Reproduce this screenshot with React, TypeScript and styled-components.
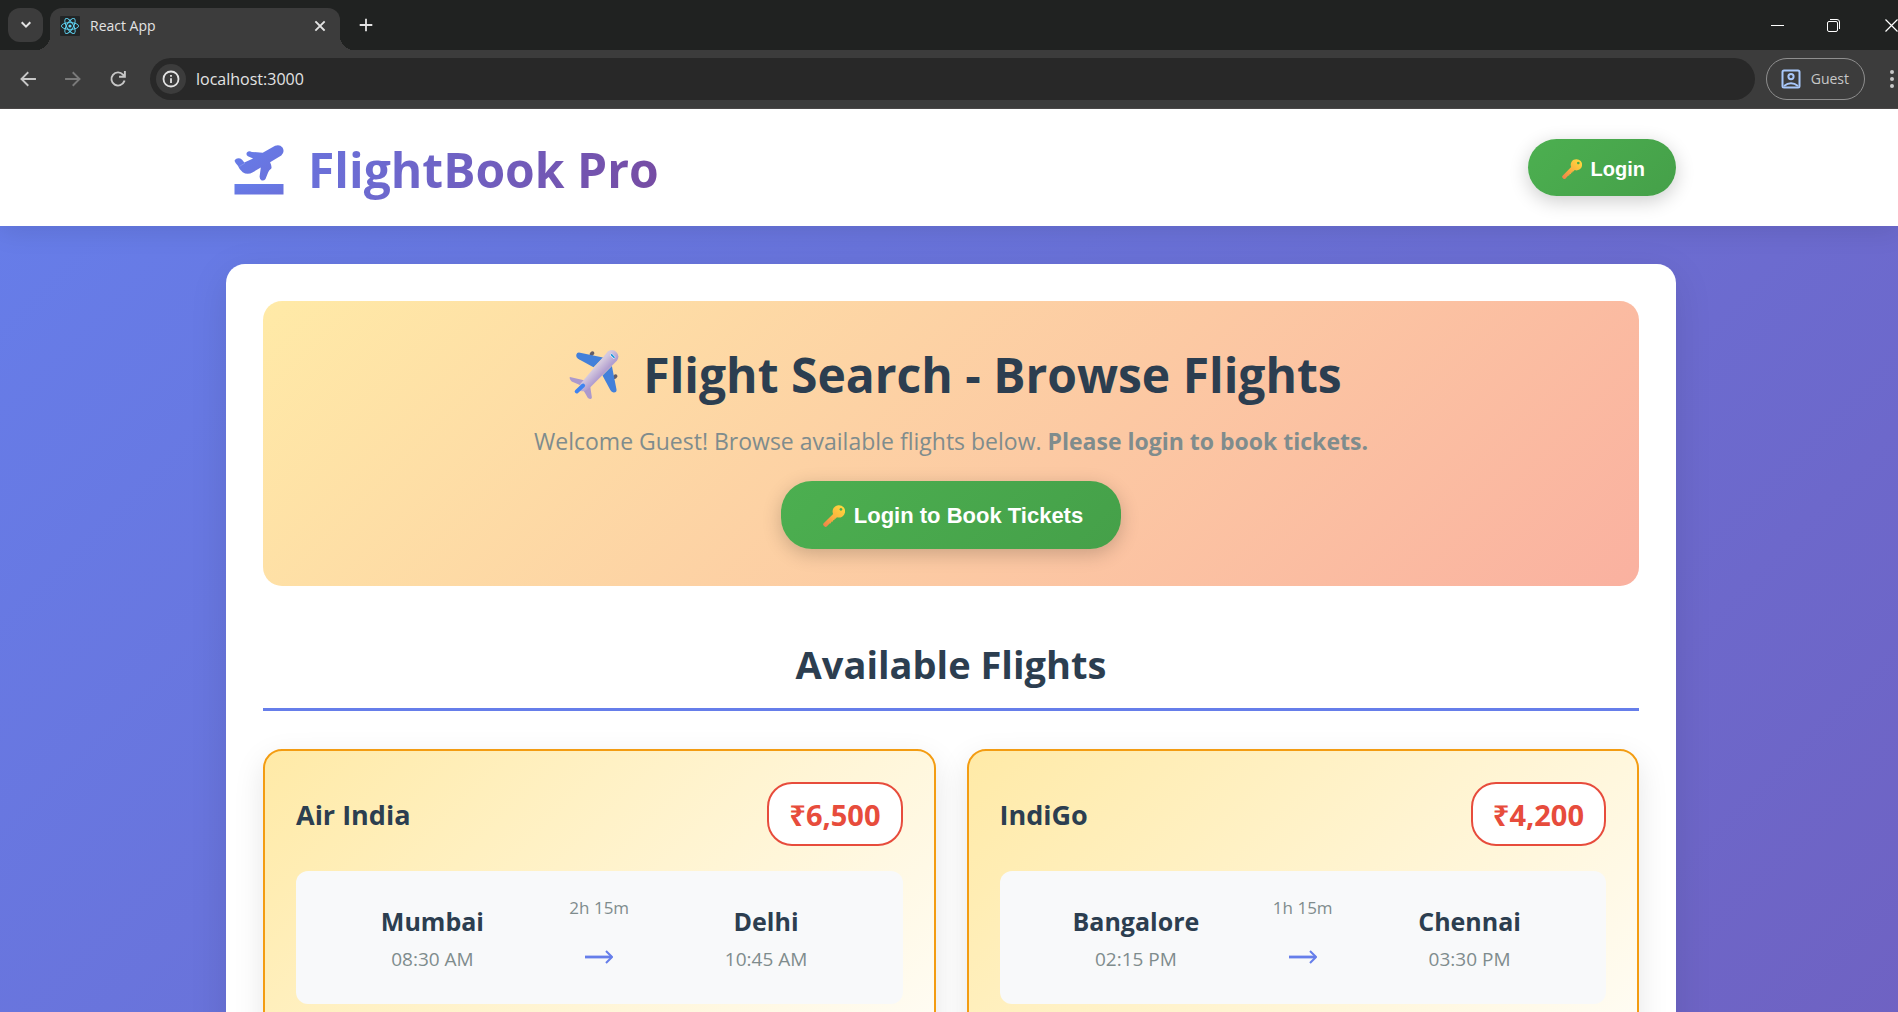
import React from "react";
import styled, { createGlobalStyle } from "styled-components";

const sans = `"Open Sans", "Noto Sans", sans-serif`;
const ink = "#2c3e50";
const muted = "#7f8c8d";

const GlobalStyle = createGlobalStyle`
  *, *::before, *::after { box-sizing: border-box; }
  body { margin: 0; overflow: hidden; font-family: ${sans}; color: ${ink}; }
  h1, h2, h3, p { margin: 0; }
  button { font: inherit; color: inherit; border: 0; background: none; padding: 0; cursor: pointer; }
  svg { display: block; flex: none; }
`;

const Window = styled.div`
  display: flex;
  flex-direction: column;
  height: 100vh;
  overflow: hidden;
`;

/* ---- browser frame ---- */

const TabStrip = styled.div`
  display: flex;
  align-items: flex-end;
  flex: none;
  height: 50px;
  padding-left: 8px;
  background: #202221;
  color: #e3e3e3;
`;

const TabSearch = styled.button`
  display: grid;
  place-items: center;
  width: 35px;
  height: 34px;
  margin-bottom: 8px;
  border-radius: 12px;
  background: #3c3c3c;
`;

const Tab = styled.div`
  position: relative;
  display: flex;
  align-items: center;
  gap: 10px;
  width: 290px;
  height: 42px;
  margin-left: 7px;
  padding: 0 12px 7px 10px;
  border-radius: 12px 12px 0 0;
  background: #3c3c3c;
  font-size: 14px;
  line-height: 20px;

  &::before,
  &::after {
    content: "";
    position: absolute;
    bottom: 0;
    width: 14px;
    height: 14px;
  }
  &::before {
    right: 100%;
    background: radial-gradient(circle at 0 0, transparent 14px, #3c3c3c 14px);
  }
  &::after {
    left: 100%;
    background: radial-gradient(circle at 100% 0, transparent 14px, #3c3c3c 14px);
  }
`;

const TabTitle = styled.span`
  flex: 1;
`;

const IconButton = styled.button<{ $w?: number; $h?: number }>`
  display: grid;
  place-items: center;
  flex: none;
  width: ${(p) => p.$w ?? 16}px;
  height: ${(p) => p.$h ?? 16}px;
`;

const NewTab = styled(IconButton)`
  margin: 0 0 17px 18px;
`;

const WindowControls = styled.div`
  display: flex;
  align-items: center;
  height: 50px;
  margin-left: auto;
`;

const CloseWindow = styled(IconButton)`
  justify-content: end;
`;

const Toolbar = styled.div`
  display: flex;
  align-items: center;
  flex: none;
  height: 59px;
  padding: 7px 0 8px 5px;
  border-bottom: 1px solid #4a4747;
  background: #3c3c3c;
  color: #c7c7c7;
`;

const AddressBar = styled.label`
  display: flex;
  align-items: center;
  flex: 1;
  gap: 10px;
  height: 42px;
  margin: 0 11px 0 10px;
  padding-left: 6px;
  border-radius: 21px;
  background: #282828;
`;

const SiteInfo = styled.span`
  display: grid;
  place-items: center;
  width: 30px;
  height: 30px;
  border-radius: 50%;
  background: #3c3c3c;
  color: #e3e3e3;
`;

const AddressInput = styled.input`
  flex: 1;
  border: 0;
  padding: 0;
  outline: 0;
  background: none;
  color: #e3e3e3;
  font-family: ${sans};
  font-size: 16px;
  line-height: 24px;
`;

const Profile = styled.button`
  display: flex;
  align-items: center;
  gap: 10px;
  height: 42px;
  padding: 0 15px 0 14px;
  border: 1px solid #8f8f8f;
  border-radius: 21px;
  font-size: 14px;
  line-height: 20px;
`;

/* ---- page ---- */

const Viewport = styled.div`
  flex: 1;
  min-height: 0;
  overflow: hidden;
`;

const Page = styled.div`
  min-height: 320vh;
  background: linear-gradient(135deg, #667eea 0%, #764ba2 100%);
`;

const Header = styled.header`
  position: relative;
  height: 117px;
  padding: 0 16px 0 20px;
  background: #fff;
  box-shadow: 0 5px 25px rgba(0, 0, 0, 0.1);
`;

const HeaderInner = styled.div`
  display: flex;
  align-items: center;
  justify-content: space-between;
  max-width: 1450px;
  height: 100%;
  margin: 0 auto;
`;

const Logo = styled.h1`
  display: flex;
  align-items: center;
  gap: 24px;
  padding: 4px 0 0 8px;
  font-size: 48px;
  line-height: 68px;
`;

const LogoText = styled.span`
  background: linear-gradient(110deg, #6a72dc 0%, #764ba2 100%);
  background-clip: text;
  -webkit-background-clip: text;
  color: transparent;
`;

const LoginButton = styled.button<{ $large?: boolean }>`
  display: inline-flex;
  align-items: center;
  gap: 9px;
  height: ${(p) => (p.$large ? 68 : 57)}px;
  padding: ${(p) => (p.$large ? "2px 38px 0 42px" : "2px 31px 0 34px")};
  border-radius: 31px;
  background: linear-gradient(135deg, #4caf50, #45a049);
  box-shadow: 0 5px 19px rgba(0, 0, 0, 0.2);
  color: #fff;
  font-family: "Liberation Sans", Arial, sans-serif;
  font-weight: 700;
  font-size: ${(p) => (p.$large ? 22 : 20)}px;
  line-height: 26px;
  white-space: nowrap;
`;

const Main = styled.main`
  padding: 38px 16px 38px 20px;
`;

const Panel = styled.div`
  max-width: 1450px;
  margin: 0 auto;
  padding: 37px;
  border-radius: 19px;
  background: #fff;
  box-shadow: 0 10px 38px rgba(0, 0, 0, 0.1);
`;

const Banner = styled.section`
  display: flex;
  flex-direction: column;
  align-items: center;
  padding: 37px;
  border-radius: 19px;
  background: linear-gradient(135deg, #ffeaa7 0%, #fab1a0 100%);
  text-align: center;
`;

const BannerTitle = styled.h2`
  display: flex;
  align-items: center;
  gap: 24px;
  padding-left: 9px;
  font-size: 48px;
  line-height: 74px;
`;

const BannerText = styled.p`
  margin: 11px 0 21px;
  color: ${muted};
  font-size: 23px;
  line-height: 37px;
`;

const SectionTitle = styled.h2`
  margin: 50px 0 38px;
  padding-bottom: 15px;
  border-bottom: 3px solid #667eea;
  text-align: center;
  font-size: 38px;
  line-height: 57px;
`;

const FlightGrid = styled.div`
  display: grid;
  grid-template-columns: repeat(2, 1fr);
  gap: 31px;
`;

const FlightCard = styled.article`
  padding: 31px;
  border: 2px solid #f39c12;
  border-radius: 19px;
  background: linear-gradient(135deg, #ffeaa7 0%, #fff 100%);
  box-shadow: 0 10px 31px rgba(0, 0, 0, 0.1);
  min-height: 420px;
`;

const CardTop = styled.div`
  display: flex;
  align-items: center;
  justify-content: space-between;
  margin-bottom: 25px;
`;

const Airline = styled.h3`
  padding-top: 2px;
  font-size: 27px;
  line-height: 38px;
`;

const Price = styled.span`
  padding: 11px 20px 9px;
  border: 2px solid #e74c3c;
  border-radius: 25px;
  background: #fff;
  color: #e74c3c;
  font-weight: 700;
  font-size: 29px;
  line-height: 40px;
`;

const Route = styled.div`
  display: grid;
  grid-template-columns: repeat(3, 1fr);
  align-items: center;
  height: 133px;
  padding: 0 53px;
  border-radius: 12px;
  background: #f8f9fa;
  text-align: center;
`;

const Stop = styled.div`
  padding-top: 4px;
  line-height: 38px;
`;

const City = styled.div`
  font-weight: 700;
  font-size: 25px;
`;

const Time = styled.div`
  color: ${muted};
  font-size: 19px;
`;

const Leg = styled.div`
  display: flex;
  flex-direction: column;
  align-items: center;
  gap: 26px;
  padding-bottom: 20px;
  color: ${muted};
  font-size: 17px;
  line-height: 32px;
`;

/* ---- drawings ---- */

const stroke = { fill: "none", stroke: "currentColor", strokeLinecap: "square" as const };

const ReactMark = () => (
  <svg width="20" height="20" viewBox="0 0 20 20">
    <rect width="20" height="20" rx="1" fill="#222526" />
    <g fill="none" stroke="#61dafb" strokeWidth="0.9">
      <ellipse cx="10" cy="10" rx="8.6" ry="3.4" />
      <ellipse cx="10" cy="10" rx="8.6" ry="3.4" transform="rotate(60 10 10)" />
      <ellipse cx="10" cy="10" rx="8.6" ry="3.4" transform="rotate(120 10 10)" />
    </g>
    <circle cx="10" cy="10" r="1.6" fill="#61dafb" />
  </svg>
);

const Key = ({ size }: { size: number }) => (
  <svg width={size} height={size} viewBox="0 0 20 20" aria-hidden="true">
    <defs>
      <linearGradient id="keyGold" x1="1" y1="0" x2="0" y2="1">
        <stop offset="0.1" stopColor="#ffd63d" />
        <stop offset="0.55" stopColor="#fbb040" />
        <stop offset="1" stopColor="#ee7f4b" />
      </linearGradient>
    </defs>
    <path
      fill="url(#keyGold)"
      fillRule="evenodd"
      d="M14.4 0.2a5.6 5.6 0 1 1-1.7 10.9L11.4 12.4 10.6 12.4 10.4 13.6 9.2 13.8 9 15 7.6 15.2 7.2 16.6 6 16.8 3.6 19.4Q2.4 20.4 1.2 19.4L0.5 18.7Q-0.3 17.7 0.6 16.7L9.2 8.1A5.6 5.6 0 0 1 14.4 0.2ZM16.3 2.7a1.3 1.3 0 1 0 0.01 0Z"
    />
  </svg>
);

const Departure = () => (
  <svg width="50" height="50" viewBox="0 0 49 50" aria-hidden="true">
    <defs>
      <linearGradient id="dep" x1="0" y1="0" x2="1" y2="1">
        <stop offset="0" stopColor="#667eea" />
        <stop offset="1" stopColor="#6a70db" />
      </linearGradient>
    </defs>
    <g fill="url(#dep)">
      <path d="M0 15.8 1.3 14Q4.6 12.4 7.6 14.7L9.8 17.4 18.6 13.4 13.4 11.2Q11 9.4 12.6 7.3 14.4 5.4 17.4 6.9L28.2 7.8 40.6 0.8Q45.2-1 48 2.6 50.6 7 46.8 10.4L35.6 17.2Q37.6 21.6 36.8 23.6L34.9 25.2 33.7 27.2 31 34Q29.4 36 27.2 35.4 25 34.4 25.1 31.6L26.3 22.6 18.4 27.2Q13 30.2 8.2 27.2 4.8 24.6 3.4 20.8Q0.6 18 0 15.8Z" />
      <path d="M0 39H49V49.4H0Z" />
    </g>
    <path d="M5 21.4 10.6 18" stroke="#9aa8f0" strokeWidth="0.5" />
  </svg>
);

const Plane = () => (
  <svg width="50" height="50" viewBox="0 0 49 50" aria-hidden="true">
    <defs>
      <linearGradient id="hull" x1="0.3" y1="0.3" x2="0.7" y2="0.7">
        <stop offset="0.3" stopColor="#d5c9de" />
        <stop offset="0.7" stopColor="#b29fd0" />
      </linearGradient>
    </defs>
    <g fill="#635d68">
      <ellipse cx="22.5" cy="3.6" rx="2" ry="2.6" transform="rotate(45 22.5 3.6)" />
      <ellipse cx="45.6" cy="26.6" rx="2.6" ry="2" transform="rotate(-45 45.6 26.6)" />
    </g>
    <g fill="#4380da">
      <path d="M9.4 2.5 33.5 7.4 24 17.2 9.4 9.2Q6.2 7.2 6.8 4.7 7.4 2.4 9.4 2.5Z" />
      <path d="M42.4 16 47 39.4Q47.4 42.4 44.4 42.4 42.2 42.6 40.8 40L33 25.6Z" />
    </g>
    <path fill="#ac99cc" d="M0.4 27 15.6 30.4 11 35.2 2.2 31.4Q-0.6 28.6 0.4 27ZM20.4 34.6 22.4 47.6Q21.6 50.4 18.4 48L13.2 39Z" />
    <path fill="url(#hull)" d="M38.4 1.4Q43.2-1.6 46.8 1.9 50.6 5.8 47.6 10.4L20.6 37.4Q14.6 42.4 10.8 41 8.4 38.6 11.2 33.6Z" />
    <path d="M7.2 41.4 13.6 35.6" stroke="#3f83f0" strokeWidth="4" strokeLinecap="round" />
    <path d="M41.2 4.2 45.2 8" stroke="#eef6ff" strokeWidth="2.6" />
    <path d="M41.6 4.4 45 7.8" stroke="#1593d6" strokeWidth="1.6" />
  </svg>
);

const Arrow = () => (
  <svg width="28" height="14" viewBox="0 0 28 14" fill="none" stroke="#667eea" aria-hidden="true">
    <path d="M0 7H26.5" strokeWidth="2.8" />
    <path d="M21 1 27 7 21 13" strokeWidth="2" />
  </svg>
);

const flights = [
  { airline: "Air India", price: "₹6,500", from: "Mumbai", dep: "08:30 AM", duration: "2h 15m", to: "Delhi", arr: "10:45 AM" },
  { airline: "IndiGo", price: "₹4,200", from: "Bangalore", dep: "02:15 PM", duration: "1h 15m", to: "Chennai", arr: "03:30 PM" },
];

const BrowserFrame = () => (
  <>
    <TabStrip>
      <TabSearch aria-label="Search tabs">
        <svg width="12" height="12" viewBox="0 0 12 12" {...stroke} strokeWidth="2">
          <path d="M2.4 4 6 7.6 9.6 4" />
        </svg>
      </TabSearch>
      <Tab>
        <ReactMark />
        <TabTitle>React App</TabTitle>
        <IconButton aria-label="Close tab">
          <svg width="16" height="16" viewBox="0 0 16 16" {...stroke} strokeWidth="1.8">
            <path d="M4 4 12 12M12 4 4 12" />
          </svg>
        </IconButton>
      </Tab>
      <NewTab aria-label="New tab">
        <svg width="16" height="16" viewBox="0 0 16 16" {...stroke} strokeWidth="1.8">
          <path d="M8 2.6V13.4M2.6 8H13.4" />
        </svg>
      </NewTab>
      <WindowControls>
        <IconButton $w={56} $h={49} aria-label="Minimize">
          <svg width="13" height="13" viewBox="0 0 13 13" fill="none" stroke="#fff">
            <path d="M0 6.5H13" />
          </svg>
        </IconButton>
        <IconButton $w={56} $h={49} aria-label="Restore">
          <svg width="13" height="13" viewBox="0 0 13 13" fill="none" stroke="#fff">
            <rect x="0.5" y="2.5" width="10" height="10" rx="1.5" />
            <path d="M3 0.5H10Q12.5 0.5 12.5 3V10" />
          </svg>
        </IconButton>
        <CloseWindow $w={37} $h={49} aria-label="Close window">
          <svg width="13" height="13" viewBox="0 0 13 13" fill="none" stroke="#fff" strokeWidth="1.2">
            <path d="M0.5 0.5 12.5 12.5M12.5 0.5 0.5 12.5" />
          </svg>
        </CloseWindow>
      </WindowControls>
    </TabStrip>
    <Toolbar>
      <IconButton $w={45} $h={40} aria-label="Back">
        <svg width="16" height="16" viewBox="0 0 16 16" {...stroke} strokeWidth="1.9">
          <path d="M1.8 8H15M7.6 1.9 1.5 8 7.6 14.1" />
        </svg>
      </IconButton>
      <IconButton $w={45} $h={40} aria-label="Forward">
        <svg width="16" height="16" viewBox="0 0 16 16" {...stroke} stroke="#7a7a7a" strokeWidth="1.9">
          <path d="M1 8H14.2M8.4 1.9 14.5 8 8.4 14.1" />
        </svg>
      </IconButton>
      <IconButton $w={45} $h={40} aria-label="Reload">
        <svg width="18" height="18" viewBox="0 0 18 18" {...stroke} strokeWidth="1.9">
          <path d="M15.2 11.4A6.6 6.6 0 1 1 14 4.6L15.6 6.4M15.9 2V6.8H11" />
        </svg>
      </IconButton>
      <AddressBar>
        <SiteInfo>
          <svg width="18" height="18" viewBox="0 0 18 18" fill="none" stroke="currentColor" strokeWidth="1.8">
            <circle cx="9" cy="9" r="7.5" />
            <path d="M9 8.2V13M9 5V6.8" />
          </svg>
        </SiteInfo>
        <AddressInput aria-label="Address" defaultValue="localhost:3000" />
      </AddressBar>
      <Profile>
        <svg width="20" height="20" viewBox="0 0 20 20" fill="none" stroke="#a8c7fa" strokeWidth="2">
          <rect x="1.5" y="1.5" width="17" height="17" rx="1.5" />
          <circle cx="10" cy="7.6" r="2.6" />
          <path d="M3 17Q10 11.6 17 17" />
        </svg>
        Guest
      </Profile>
      <IconButton $w={33} $h={40} aria-label="Menu">
        <svg width="33" height="20" viewBox="0 0 33 20" fill="currentColor">
          <circle cx="27" cy="3" r="2" />
          <circle cx="27" cy="10" r="2" />
          <circle cx="27" cy="17" r="2" />
        </svg>
      </IconButton>
    </Toolbar>
  </>
);

export default function App() {
  return (
    <Window>
      <GlobalStyle />
      <BrowserFrame />
      <Viewport>
        <Page>
          <Header>
            <HeaderInner>
              <Logo>
                <Departure />
                <LogoText>FlightBook Pro</LogoText>
              </Logo>
              <LoginButton>
                <Key size={20} />
                Login
              </LoginButton>
            </HeaderInner>
          </Header>
          <Main>
            <Panel>
              <Banner>
                <BannerTitle>
                  <Plane />
                  Flight Search - Browse Flights
                </BannerTitle>
                <BannerText>
                  Welcome Guest! Browse available flights below. <strong>Please login to book tickets.</strong>
                </BannerText>
                <LoginButton $large>
                  <Key size={22} />
                  Login to Book Tickets
                </LoginButton>
              </Banner>
              <SectionTitle>Available Flights</SectionTitle>
              <FlightGrid>
                {flights.map((f) => (
                  <FlightCard key={f.airline}>
                    <CardTop>
                      <Airline>{f.airline}</Airline>
                      <Price>{f.price}</Price>
                    </CardTop>
                    <Route>
                      <Stop>
                        <City>{f.from}</City>
                        <Time>{f.dep}</Time>
                      </Stop>
                      <Leg>
                        {f.duration}
                        <Arrow />
                      </Leg>
                      <Stop>
                        <City>{f.to}</City>
                        <Time>{f.arr}</Time>
                      </Stop>
                    </Route>
                  </FlightCard>
                ))}
              </FlightGrid>
            </Panel>
          </Main>
        </Page>
      </Viewport>
    </Window>
  );
}
